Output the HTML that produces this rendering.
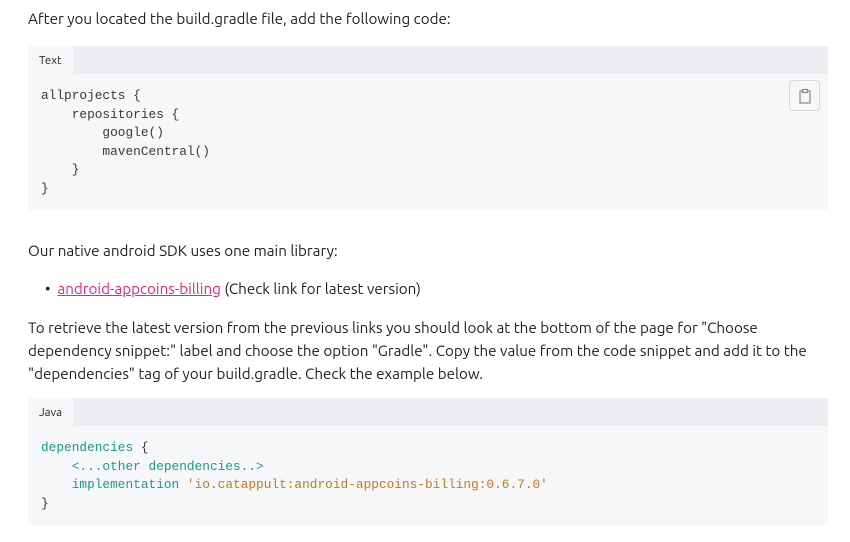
<!DOCTYPE html>
<html><head><meta charset="utf-8"><style>
*{margin:0;padding:0;box-sizing:border-box}
body{width:850px;height:542px;background:#fff;font-family:"Ubuntu","Liberation Sans",sans-serif;font-size:15.2px;color:#1c1e21;position:relative;overflow:hidden}
.t{position:absolute;left:28px;white-space:nowrap}
.cb{position:absolute;left:28px;width:800px;background:#f6f7f8;border-radius:3px}
.hd{height:28px;background:#ebedf0;position:relative}
.tab{position:absolute;left:0;top:0;height:28px;width:45px;background:#f6f7f8;font-size:11.5px;line-height:29px;padding-left:11px;color:#1c1e21}
pre{font-family:"Liberation Mono","DejaVu Sans Mono",monospace;font-size:12.8px;line-height:18.6px;color:#393a34;padding:13px 0 0 13px}
.k{color:#1a9a8f}.s{color:#c5791f}
.cp{position:absolute;left:761px;top:34px;width:31px;height:31px;border:1px solid #d6d7d9;border-radius:4px;background:#f6f7f8}
a{color:#e8237b;text-decoration:underline}
</style></head><body>
<div class="t" style="top:10px">After you located the build.gradle file, add the following code:</div>
<div class="cb" style="top:46px;height:164px">
<div class="hd"><div class="tab">Text</div></div>
<pre>allprojects {
    repositories {
        google()
        mavenCentral()
    }
}</pre>
<div class="cp"><svg width="31" height="31" viewBox="0 0 31 31"><rect x="10" y="10" width="10" height="12" fill="none" stroke="#888" stroke-width="1.2"/><rect x="12.5" y="8.5" width="5" height="3" fill="#f6f7f8" stroke="#888" stroke-width="1.2"/></svg></div>
</div>
<div class="t" style="top:242px">Our native android SDK uses one main library:</div>
<div class="t" style="top:280px;left:45px">•&nbsp;&nbsp;<a>android-appcoins-billing</a> (Check link for latest version)</div>
<div class="t" style="top:316px;line-height:23px">To retrieve the latest version from the previous links you should look at the bottom of the page for "Choose<br>dependency snippet:" label and choose the option "Gradle". Copy the value from the code snippet and add it to the<br>"dependencies" tag of your build.gradle. Check the example below.</div>
<div class="cb" style="top:398px;height:127px">
<div class="hd"><div class="tab">Java</div></div>
<pre><span class="k">dependencies</span> {
    <span class="k">&lt;...other dependencies..&gt;</span>
    <span class="k">implementation</span> <span class="s">'io.catappult:android-appcoins-billing:0.6.7.0'</span>
}</pre>
</div>
</body></html>
